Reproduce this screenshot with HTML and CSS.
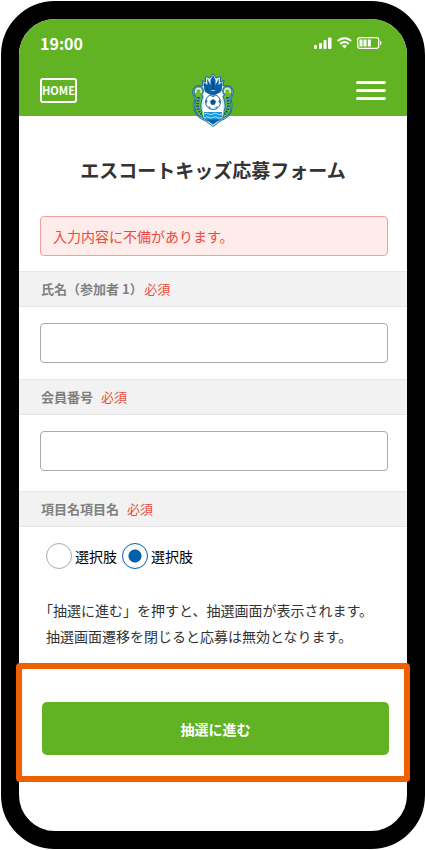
FILE: index.html
```
<!DOCTYPE html>
<html lang="ja">
<head>
    <meta charset="UTF-8">
    <meta name="viewport" content="width=device-width, initial-scale=1.0">
    <title>エスコートキッズ応募フォーム</title>
    <link rel="stylesheet" href="styles.css">
</head>
<body>
    <div class="phone">
        <header class="header">
            <div class="status-bar">
                <span class="time">19:00</span>
                <div class="status-icons">
                    <svg width="18" height="12" viewBox="0 0 18 12" fill="#fff">
                        <rect x="0" y="8" width="3" height="4" rx="1"/>
                        <rect x="5" y="6" width="3" height="6" rx="1"/>
                        <rect x="9.500" y="3" width="3" height="9" rx="1"/>
                        <rect x="14" y="0.500" width="3.500" height="11.500" rx="1"/>
                    </svg>
                    <svg width="15" height="12" viewBox="0 0 15 12" fill="none" stroke="#fff" stroke-width="1.900">
                        <path d="M0.800 4.200C4.500 0.200 10.500 0.200 14.200 4.200"/>
                        <path d="M3.300 7C5.600 4.400 9.400 4.400 11.700 7"/>
                        <path d="M5 8.800Q7.500 6.900 10 8.800L7.500 11.600Z" fill="#fff" stroke="none"/>
                    </svg>
                    <svg width="25" height="12" viewBox="0 0 25 12" fill="#fff">
                        <rect x="0.700" y="0.700" width="21" height="10.600" rx="2" fill="none" stroke="#fff" stroke-width="1.300"/>
                        <rect x="2.500" y="2.500" width="3" height="7"/>
                        <rect x="6.500" y="2.500" width="3" height="7"/>
                        <rect x="10.800" y="2.500" width="3" height="7"/>
                        <path d="M23 4q1.500 0 1.500 2T23 8z"/>
                    </svg>
                </div>
            </div>
            <nav class="nav">
                <a class="home" href="#">HOME</a>
                <svg class="emblem" width="42" height="54" viewBox="0 0 42 54">
                    <!-- outline -->
                    <path d="M21 .5L24 5 28.500 3.500 28.500 9 32 7.500 31 13Q41 11 41.500 18.500 41.500 22 39 25 41 32 39.500 38 37 45 29 47.500L21 53.500 13 47.500Q5 45 2.500 38 1 32 3 25 .5 22 .5 18.500 1 11 11 13L10 7.500 13.500 9 13.500 3.500 18 5z" fill="#d9ebf5" stroke="#1769aa" stroke-width="1"/>
                    <!-- crown -->
                    <path d="M21 2L23.500 7V12L27 5.500 26.500 12 30.500 9 29.500 18 21 21 12.500 18 11.500 9 15.500 12 15 5.500 18.500 12V7z" fill="#0760a8"/>
                    <path d="M21 8v9M14 15l4 3M28 15l-4 3" stroke="#083a6b" stroke-width="1"/>
                    <!-- scrolls -->
                    <g fill="none" stroke="#1769aa" stroke-width="7" stroke-linecap="round">
                        <path d="M8 19Q9 16 6.500 16 4 16 5 20.500L7.500 24Q4 35 8 40L16 44.500"/>
                        <path d="M34 19Q33 16 35.500 16 38 16 37 20.500L34.500 24Q38 35 34 40L26 44.500"/>
                    </g>
                    <g fill="none" stroke="#6fbd35" stroke-width="5" stroke-linecap="round">
                        <path d="M8 19Q9 16 6.500 16 4 16 5 20.500L7.500 24Q4 35 8 40L16 44.500"/>
                        <path d="M34 19Q33 16 35.500 16 38 16 37 20.500L34.500 24Q38 35 34 40L26 44.500"/>
                    </g>
                    <g fill="none" stroke="#e9f4df" stroke-width="1.400">
                        <path d="M9 20Q10 15.500 6.500 15.500 3 16 4 20"/>
                        <path d="M33 20Q32 15.500 35.500 15.500 39 16 38 20"/>
                    </g>
                    <g fill="none" stroke="#145a87" stroke-width="2.800" stroke-dasharray="1.600 1.200">
                        <path d="M7 24Q4 34 8 39.500L12 43"/>
                        <path d="M35 24Q38 34 34 39.500L30 43"/>
                    </g>
                    <!-- shield -->
                    <path d="M12 19Q21 15 30 19V31Q33 38 30 45L21 50 12 45Q9 38 12 31z" fill="#fff"/>
                    <path d="M13 19L21 23 29 19 27 16 21 18 15 16z" fill="#0760a8"/>
                    <circle cx="21" cy="29" r="7.500" fill="#fff" stroke="#1769aa" stroke-width="1"/>
                    <path d="M21 26l3 2.200-1.200 3.500h-3.600L18 28.200z" fill="#075291"/>
                    <path d="M18 22.500l3 1.500 3-1.500zM14.500 26l1 2.500-1.500 2zM27.500 26l-1 2.500 1.500 2zM16 33.500l2 .2 1 2zM26 33.500l-2 .2-1 2z" fill="#075291"/>
                    <path d="M12 39H30Q31 42 29.500 45L21 51 12.500 45Q11 42 12 39z" fill="#1497dc"/>
                    <path d="M12 41q2.300-1.500 4.500 0t4.500 0 4.500 0 4.500 0M13 44.500q2-1.500 4 0t4 0 4 0 4 0" fill="none" stroke="#d9f0fa" stroke-width=".8"/>
                    <path d="M14 46.500h14L21 51.500z" fill="#0760a8"/>
                </svg>
                <button class="menu" type="button" aria-label="メニュー">
                    <span></span>
                    <span></span>
                    <span></span>
                </button>
            </nav>
        </header>

        <main>
            <h1>エスコートキッズ応募フォーム</h1>
            <form>
                <p class="alert">入力内容に不備があります。</p>

                <div class="field">
                    <label class="field-title" for="name">氏名（参加者 1<span class="half">）</span><span class="required">必須</span></label>
                    <div class="field-body">
                        <input class="text" type="text" id="name">
                    </div>
                </div>

                <div class="field">
                    <label class="field-title" for="member">会員番号<span class="required">必須</span></label>
                    <div class="field-body">
                        <input class="text" type="text" id="member">
                    </div>
                </div>

                <div class="field field-choice" role="radiogroup" aria-labelledby="choice-title">
                    <div class="field-title" id="choice-title">項目名項目名<span class="required">必須</span></div>
                    <div class="field-body choices">
                        <label class="choice"><input type="radio" name="choice">選択肢</label>
                        <label class="choice"><input type="radio" name="choice" checked>選択肢</label>
                    </div>
                </div>

                <p class="note">「抽選に進む」を押すと、抽選画面が表示されます。<br>抽選画面遷移を閉じると応募は無効となります。</p>

                <div class="submit-area">
                    <button class="submit" type="submit">抽選に進む</button>
                </div>
            </form>
        </main>
    </div>
</body>
</html>
```

FILE: styles.css
```
* {
    box-sizing: border-box;
}

body {
    margin: 0;
    padding: 1px 0 1px 1px;
    background-color: #fff;
    color: #333;
    font-family: "Noto Sans CJK JP", sans-serif;
    font-size: 14px;
}

.phone {
    min-height: calc(100vh - 2px);
    border: 18px solid #000;
    border-radius: 54px;
    background-color: #fff;
}

/* Header */
.header {
    background-color: #61b324;
    color: #fff;
    border-radius: 36px 36px 0 0;
}

.status-bar {
    display: flex;
    justify-content: space-between;
    align-items: center;
    height: 45px;
    padding: 3px 25px 0 21px;
}

.time {
    font-size: 16px;
    font-weight: bold;
}

.status-icons {
    display: flex;
    align-items: center;
    gap: 5px;
}

.nav {
    position: relative;
    display: flex;
    justify-content: space-between;
    align-items: center;
    height: 52px;
    padding: 0 21px;
}

.home {
    border: 2px solid #fff;
    border-radius: 3px;
    width: 37px;
    color: #fff;
    font-size: 11px;
    font-weight: bold;
    line-height: 21px;
    text-align: center;
    text-decoration: none;
}

.emblem {
    position: absolute;
    left: 50%;
    top: 9px;
    transform: translateX(-50%);
}

.menu {
    display: flex;
    flex-direction: column;
    gap: 5px;
    width: 30px;
    padding: 0;
    border: none;
    background: none;
    cursor: pointer;
}

.menu span {
    height: 3px;
    border-radius: 2px;
    background-color: #fff;
}

/* Form */
h1 {
    margin: 40px 0 32px;
    font-size: 19px;
    line-height: 28px;
    text-align: center;
}

.alert {
    margin: 0 19px 15px 21px;
    padding: 0 12px;
    border: 1px solid #f2a199;
    border-radius: 4px;
    background-color: #fdecea;
    color: #ea4b3c;
    line-height: 38px;
}

.field-title {
    display: block;
    padding: 0 22px;
    border-top: 1px solid #e6e6e6;
    border-bottom: 1px solid #e6e6e6;
    background-color: #f2f2f2;
    color: #808080;
    font-size: 13px;
    font-weight: bold;
    line-height: 34px;
}

.half {
    font-feature-settings: "halt";
}

.required {
    margin-left: 8px;
    color: #ea4b3c;
    font-weight: normal;
}

.field-body {
    padding: 16px 19px 16px 21px;
}

.text {
    display: block;
    width: 100%;
    height: 40px;
    padding: 0 12px;
    border: 1px solid #aaa;
    border-radius: 4px;
    background-color: #fff;
    font: inherit;
}

.field-choice {
    margin-top: 4px;
}

.choices {
    display: flex;
    gap: 5px;
    padding-left: 27px;
}

.choice {
    display: flex;
    align-items: center;
    gap: 3px;
    color: #000;
}

.choice input {
    appearance: none;
    width: 26px;
    height: 26px;
    margin: 0;
    border: 1px solid #aaa;
    border-radius: 50%;
    background-color: #fff;
}

.choice input:checked {
    border-color: #0060aa;
    background: radial-gradient(circle, #0060aa 6px, #fff 7px);
}

.note {
    margin: 12px 0 14px 27px;
    line-height: 26px;
    text-spacing-trim: trim-start;
}

.submit-area {
    margin: 0 -3px;
    padding: 33px 15px 21px 20px;
    border: 6px solid #ee6000;
    border-radius: 4px;
    background-color: #fff;
}

.submit {
    display: block;
    width: 100%;
    height: 53px;
    border: none;
    border-radius: 5px;
    background-color: #61b324;
    color: #fff;
    font-family: inherit;
    font-size: 14px;
    font-weight: bold;
    cursor: pointer;
}
```
